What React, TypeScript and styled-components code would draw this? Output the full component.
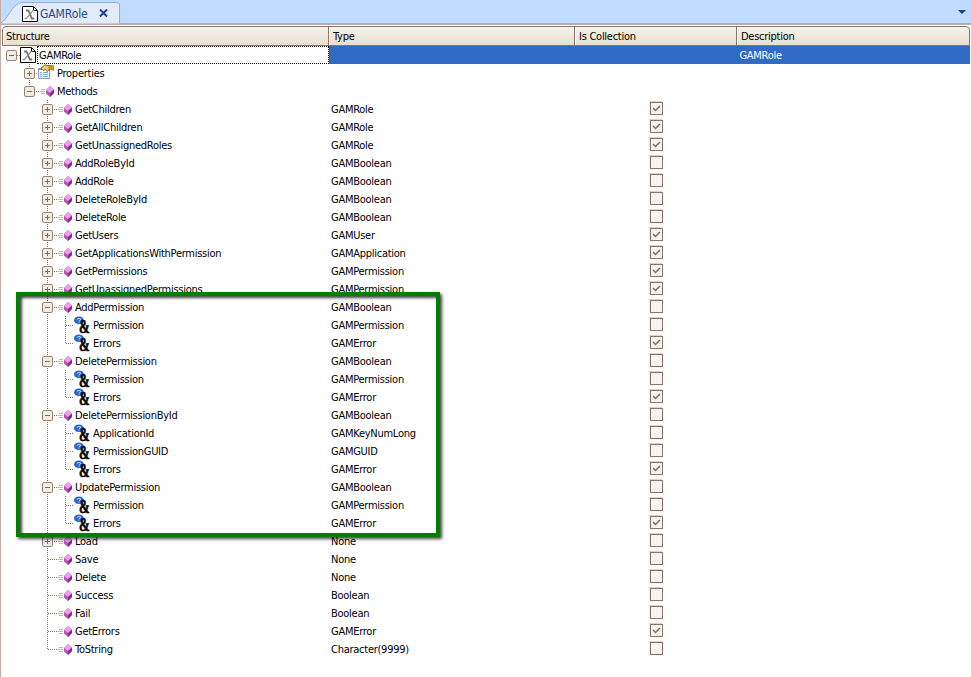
import React from "react";
import styled, { createGlobalStyle } from "styled-components";

const Global = createGlobalStyle`
  body { margin: 0; background: #fff; overflow: hidden; }
  * { box-sizing: border-box; }
`;
const Page = styled.div`
  width: 971px; height: 677px; position: relative; overflow: hidden;
  border-left: 1px solid #c0ada5;
  font: 11px/18px "DejaVu Sans Condensed", "DejaVu Sans", sans-serif;
  letter-spacing: -0.26px; color: #000;
`;
const TabBar = styled.header`
  height: 25px; margin: 0 0 1px -1px; background: #bfdbff; display: flex; justify-content: space-between;
  border-bottom: 1px solid #c0ada5; box-shadow: inset 0 -1px #8db2e3;
`;
const Tab = styled.div`position: relative; width: 121px; height: 24px;`;
const TabShape = styled.svg`display: block;`;
const TabContent = styled.div`
  position: absolute; inset: 4px 0 0 22px; display: flex; height: 18px; align-items: center;
  color: #234a92; font-size: 12px;
`;
const TabTitle = styled.span`width: 60px; padding-left: 1px; line-height: 18px; padding-top: 2px; letter-spacing: -0.1px;`;
const Arrow = styled.svg`margin: 10px 4px 0 0;`;
const Header = styled.div`
  display: grid; grid-template-columns: 326px 246px 162px 1fr; height: 20px; width: 968px; margin-left: 1px;
  border: 1px solid #8b7367; border-radius: 4px 4px 0 0; overflow: hidden;
  background: linear-gradient(#f5f3ec, #e7e0d0);
`;
const HeadCell = styled.div`
  border-right: 1px solid #8b7367; padding-left: 4px; line-height: 19px; box-shadow: inset 1px 0 #fffc;
  &:first-child { padding-left: 3px; }
  &:last-child { border-right: 0; }
`;
const Row = styled.div`
  display: grid; grid-template-columns: 327px 318px 89px 1fr; height: 18px; width: 969px;
`;
const Tree = styled.div`display: flex; height: 18px;`;
const Guides = styled.svg`flex: none; display: block;`;
const Icon = styled.svg`flex: none; display: block; overflow: visible;`;
const Label = styled.span<{ $gap?: number }>`
  white-space: nowrap; line-height: 20px; padding-left: ${(p) => p.$gap ?? 0}px;
`;
const Type = styled.span`padding-left: 3px; white-space: nowrap; line-height: 20px;`;
const Box = styled.svg`margin: 1px 0 0 3px; display: block;`;
const Highlight = styled.div`
  position: absolute; left: 15px; top: 292px; width: 424px; height: 245px; border: 4px solid #008000;
  box-shadow: 2px 2px 3px #000b, inset 2px 2px 3px #000b; pointer-events: none;
`;
const RootRow = styled.div`
  height: 18px; display: grid; grid-template: 18px / 36px 292px 641px; width: 969px;
`;
const RootLabel = styled.div`height: 18px; border: 1px dotted #000; padding-left: 1px; line-height: 18px;`;
const RootFill = styled.div`height: 18px; background: #316ac5; color: #fff; padding-left: 410.400px; line-height: 19px;`;
const Glyph = styled.text`font-family: "Liberation Serif", serif; font-weight: bold; letter-spacing: 0;`;

const PageShape = () => (
  <>
    <path d="M.5 .5H11.500L15.500 4.500V15.500H.5Z" fill="#fff" stroke="#000" />
    <path d="M11.500 1V4.500H15" fill="none" stroke="#000" />
    <path d="M4 4.500H6.500L9.800 12.500H12.200" fill="none" stroke="#777" strokeWidth="1.900" />
    <path d="M12.500 4.500H11L4.500 12.500H2.500" fill="none" stroke="#8a8a8a" strokeWidth="1.200" />
  </>
);
const MethodIcon = () => (
  <Icon width="17" height="18" viewBox="0 0 17 18">
    <path d="M1 7.500H5M0 9.500H5M1 11.500H5" stroke="#b9b7a9" />
    <path d="M6 8L10 4L14 7.500V11L10 15L6 11.500Z" fill="#b94fbb" />
    <path d="M6 8L10 4L14 7.500L10 11Z" fill="#f09cf2" />
    <path d="M10 11L14 7.500V11L10 15Z" fill="#7b357e" />
  </Icon>
);
const PropertiesIcon = () => (
  <Icon width="17" height="18" viewBox="0 0 17 18">
    <path d="M.5 4.500H11.500V14.500H.5Z" fill="#f7fbff" stroke="#8499c4" />
    <path d="M1 5.500H11" stroke="#6d8fd0" />
    <path d="M2 8.500H4M5 8.500H10M2 10.500H4M5 10.500H10M2 12.500H4M5 12.500H10" stroke="#86a5d8" />
    <path d="M3 4L7 .8L9 1.500H12V5L9 7.500L7.500 5.500L5 6.500Z" fill="#f0d060" stroke="#6b5520" strokeWidth=".8" />
    <path d="M11 1.500H15.500V6.500L13 5.500L11 6Z" fill="#c79a1c" stroke="#8a6d1e" strokeWidth=".6" />
  </Icon>
);
const ParamIcon = () => (
  <Icon width="17" height="18" viewBox="0 0 17 18">
    <ellipse cx="4.900" cy="4.300" rx="4.900" ry="3.800" fill="#2b66cf" />
    <path d="M2.800 3.500Q5 1.300 7 3.300L5 4.800M5 5.500V6.500" stroke="#dce8ff" strokeWidth=".9" fill="none" />
    <Glyph transform="translate(5 16.500) scale(.86 1.200)" fontSize="15" fill="#000" stroke="#000" strokeWidth=".5">&amp;</Glyph>
  </Icon>
);
const Expander = ({ x, open }: { x: number; open?: boolean }) => (
  <g transform={`translate(${x} 4)`}>
    <rect x=".5" y=".5" width="10" height="10" rx="1.500" fill="#f1ede4" stroke="#9a8171" />
    <path d={open ? "M3 5.500H8" : "M3 5.500H8M5.500 3V8"} stroke="#7a6a5f" />
  </g>
);

type Item = { n: string; t: string; c?: boolean; k?: "p" | "e" | "o"; last?: boolean };
const B = "GAMBoolean", P = "GAMPermission", E = "GAMError";
const items: Item[] = [
  { n: "GetChildren", t: "GAMRole", c: true, k: "e" },
  { n: "GetAllChildren", t: "GAMRole", c: true, k: "e" },
  { n: "GetUnassignedRoles", t: "GAMRole", c: true, k: "e" },
  { n: "AddRoleById", t: B, k: "e" }, { n: "AddRole", t: B, k: "e" },
  { n: "DeleteRoleById", t: B, k: "e" }, { n: "DeleteRole", t: B, k: "e" },
  { n: "GetUsers", t: "GAMUser", c: true, k: "e" },
  { n: "GetApplicationsWithPermission", t: "GAMApplication", c: true, k: "e" },
  { n: "GetPermissions", t: P, c: true, k: "e" },
  { n: "GetUnassignedPermissions", t: P, c: true, k: "e" },
  { n: "AddPermission", t: B, k: "o" },
  { n: "Permission", t: P, k: "p" }, { n: "Errors", t: E, c: true, k: "p", last: true },
  { n: "DeletePermission", t: B, k: "o" },
  { n: "Permission", t: P, k: "p" }, { n: "Errors", t: E, c: true, k: "p", last: true },
  { n: "DeletePermissionById", t: B, k: "o" },
  { n: "ApplicationId", t: "GAMKeyNumLong", k: "p" }, { n: "PermissionGUID", t: "GAMGUID", k: "p" },
  { n: "Errors", t: E, c: true, k: "p", last: true },
  { n: "UpdatePermission", t: B, k: "o" },
  { n: "Permission", t: P, k: "p" }, { n: "Errors", t: E, c: true, k: "p", last: true },
  { n: "Load", t: "None", k: "e" }, { n: "Save", t: "None" }, { n: "Delete", t: "None" },
  { n: "Success", t: "Boolean" }, { n: "Fail", t: "Boolean" },
  { n: "GetErrors", t: E, c: true }, { n: "ToString", t: "Character(9999)", last: true },
];

const ItemRow = ({ item }: { item: Item }) => {
  const p = item.k === "p";
  return (
    <Row>
      <Tree>
        <Guides width={p ? 73 : 57} height="18">
          <path d={`M46.500 0V${item.last && !p ? 10 : 18}`} stroke="#777064" strokeDasharray="1 1" />
          {p ? <path d={`M64.500 0V${item.last ? 10 : 18}M65 9.500H73`} stroke="#777064" strokeDasharray="1 1" />
            : <path d="M47 9.500H56" stroke="#777064" strokeDasharray="1 1" />}
          {(item.k === "e" || item.k === "o") && <Expander x={41} open={item.k === "o"} />}
        </Guides>
        {p ? <ParamIcon /> : <MethodIcon />}
        <Label $gap={p ? 2 : 0}>{item.n}</Label>
      </Tree>
      <Type>{item.t}</Type>
      <Box width="14" height="14">
        <path d="M0 13V.5H13" fill="none" stroke="#d8d3c8" />
        <rect x="1.500" y="1.500" width="12" height="12" fill="#f5f4f2" stroke="#8b7367" />
        {item.c && <path d="M4 7L6.500 9.500L11 5" fill="none" stroke="#806a60" strokeWidth="1.500" />}
      </Box>
    </Row>
  );
};

export default function App() {
  return (
    <Page>
      <Global />
      <TabBar>
        <Tab>
          <TabShape width="121" height="24">
            <path d="M0 23.500C8 20 11 5 21 2.500H117Q119.500 2.500 119.500 5V23.500" fill="#e3ebf8" stroke="#8db2e3" />
          </TabShape>
          <TabContent>
            <Icon width="17" height="17"><g transform="translate(0 1)"><PageShape /></g></Icon>
            <TabTitle>GAMRole</TabTitle>
            <svg width="9" height="8"><path d="M1 .5L8 7.500M8 .5L1 7.500" stroke="#15428b" strokeWidth="2" /></svg>
          </TabContent>
        </Tab>
        <Arrow width="9" height="5"><path d="M0 0H8L4 4Z" fill="#15428b" /></Arrow>
      </TabBar>
      <Header>
        <HeadCell>Structure</HeadCell><HeadCell>Type</HeadCell><HeadCell>Is Collection</HeadCell><HeadCell>Description</HeadCell>
      </Header>
      <RootRow>
        <Guides width="36" height="18"><Expander x={5} open /><path d="M16 9.500H19" stroke="#777" strokeDasharray="1 1" /><g transform="translate(19 1)"><PageShape /></g></Guides>
        <RootLabel>GAMRole</RootLabel><RootFill>GAMRole</RootFill>
      </RootRow>
      <Row><Tree><Guides width="37" height="18"><path d="M28.500 0V18M29 9.500H37" stroke="#777" strokeDasharray="1 1" /><Expander x={23} /></Guides><PropertiesIcon /><Label $gap={2}>Properties</Label></Tree></Row>
      <Row><Tree><Guides width="39" height="18"><path d="M28.500 0V9M29 9.500H39" stroke="#777" strokeDasharray="1 1" /><Expander x={23} open /></Guides><MethodIcon /><Label>Methods</Label></Tree></Row>
      {items.map((item, i) => <ItemRow key={i} item={item} />)}
      <Highlight />
    </Page>
  );
}
